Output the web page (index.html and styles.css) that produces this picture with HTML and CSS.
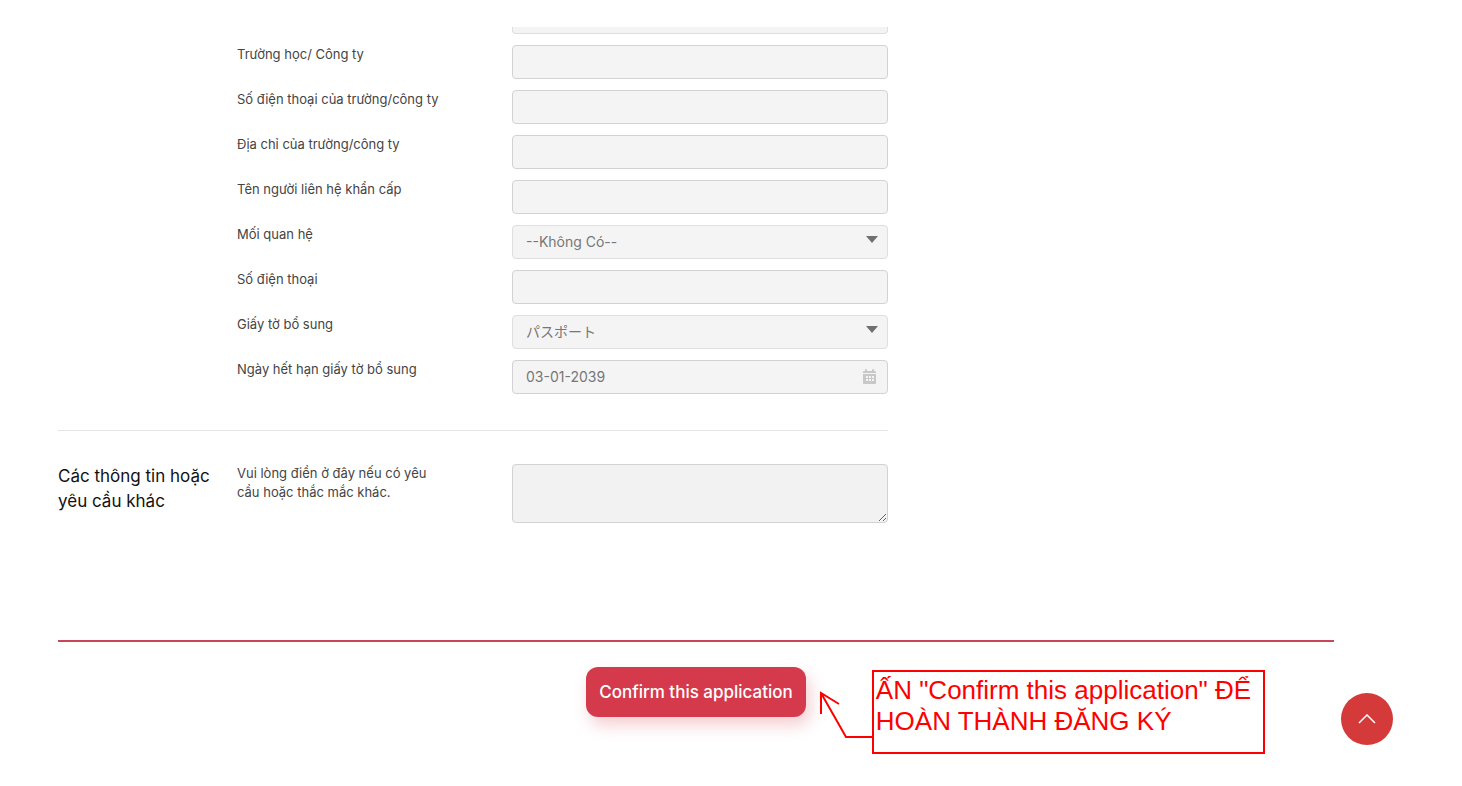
FILE: index.html
```html
<!DOCTYPE html>
<html lang="vi">
<head>
    <meta charset="UTF-8">
    <meta name="viewport" content="width=device-width, initial-scale=1.0">
    <title>Application</title>
    <link rel="stylesheet" href="styles.css">
</head>
<body>

<main class="page">
    <form>
        <section class="section">
            <div class="fields">
                <div class="row cut">
                    <input class="control" type="text" aria-label="Email" readonly>
                </div>
                <div class="row">
                    <label for="school">Trường học/ Công ty</label>
                    <input class="control" type="text" id="school" readonly>
                </div>
                <div class="row">
                    <label for="schoolPhone">Số điện thoại của trường/công ty</label>
                    <input class="control" type="text" id="schoolPhone" readonly>
                </div>
                <div class="row">
                    <label for="schoolAddress">Địa chỉ của trường/công ty</label>
                    <input class="control" type="text" id="schoolAddress" readonly>
                </div>
                <div class="row">
                    <label for="contactName">Tên người liên hệ khẩn cấp</label>
                    <input class="control" type="text" id="contactName" readonly>
                </div>
                <div class="row">
                    <label for="relation">Mối quan hệ</label>
                    <div class="control-wrap">
                        <select class="control select" id="relation">
                            <option>--Không Có--</option>
                        </select>
                        <span class="arrow"></span>
                    </div>
                </div>
                <div class="row">
                    <label for="phone">Số điện thoại</label>
                    <input class="control" type="text" id="phone" readonly>
                </div>
                <div class="row">
                    <label for="document">Giấy tờ bổ sung</label>
                    <div class="control-wrap">
                        <select class="control select" id="document">
                            <option>パスポート</option>
                        </select>
                        <span class="arrow"></span>
                    </div>
                </div>
                <div class="row">
                    <label for="expiry">Ngày hết hạn giấy tờ bổ sung</label>
                    <div class="control-wrap">
                        <input class="control" type="text" id="expiry" value="03-01-2039" readonly>
                        <svg class="calendar" viewBox="0 0 13 15" width="13" height="15">
                            <path d="M0 4V3q0-1 1-1h1V1q0-1 1-1t1 1v1h5V1q0-1 1-1t1 1v1h1q1 0 1 1v1z" fill="#c8c8c8"/>
                            <path d="M0 5h13v9q0 1-1 1H1q-1 0-1-1z" fill="#c8c8c8"/>
                            <path d="M3 7h2v2H3zM6 7h2v2H6zM9 7h2v2H9zM3 10h2v2H3zM6 10h2v2H6zM9 10h2v2H9z" fill="#f4f4f4"/>
                        </svg>
                    </div>
                </div>
            </div>
        </section>

        <section class="section other">
            <h2>Các thông tin hoặc yêu cầu khác</h2>
            <div class="fields">
                <div class="row">
                    <label for="other">Vui lòng điền ở đây nếu có yêu cầu hoặc thắc mắc khác.</label>
                    <textarea class="control textarea" id="other" readonly></textarea>
                </div>
            </div>
        </section>

        <div class="actions">
            <div class="confirm-wrap">
                <button type="submit" class="confirm">Confirm this application</button>
                <div class="note">
                    <svg class="pointer" viewBox="0 0 52 84" width="52" height="84">
                        <path d="M52 67H26L1 23M19 34L1 23V44" fill="none" stroke="#f00" stroke-width="2"/>
                    </svg>
                    <p>ẤN "Confirm this application" ĐỂ HOÀN THÀNH ĐĂNG KÝ</p>
                </div>
            </div>
        </div>
    </form>
</main>

<button type="button" class="to-top" aria-label="Top">
    <svg viewBox="0 0 18 10" width="18" height="10">
        <path d="M1 9l8-8 8 8" fill="none" stroke="#fff" stroke-width="1.5"/>
    </svg>
</button>

</body>
</html>
```
FILE: styles.css
```css
* {
    box-sizing: border-box;
}

body {
    margin: 0;
    min-height: 100vh;
    background: #fff;
    color: #444;
    font-family: Inter, "Noto Sans CJK JP", sans-serif;
    font-size: 13px;
}

.page {
    min-height: 100vh;
    padding: 27px 128px 32px 58px;
}

.section {
    display: flex;
    justify-content: flex-end;
    max-width: 830px;
}

.section h2 {
    flex: 1;
    margin: 0;
    color: #111;
    font-size: 17px;
    font-weight: 400;
    line-height: 25px;
}

.fields {
    display: flex;
    flex-direction: column;
    gap: 11px;
    width: 651px;
}

.row {
    display: flex;
    justify-content: space-between;
}

.row label {
    width: 200px;
    line-height: 19px;
    white-space: nowrap;
}

.control {
    width: 376px;
    height: 34px;
    padding: 0 13px 2px;
    border: 1px solid #d2d2d2;
    border-radius: 4px;
    background: #f4f4f4;
    color: #777;
    font-family: inherit;
    font-size: 14px;
    outline: none;
}

.cut {
    justify-content: flex-end;
}

/* only the bottom edge of the previous field is in view */
.cut .control {
    height: 7px;
    border-top: 0;
    border-color: #dedede;
    border-radius: 0 0 4px 4px;
}

.control-wrap {
    position: relative;
}

.select {
    display: block;
    appearance: none;
    border-color: #dfdfdf;
}

.arrow {
    position: absolute;
    top: 11px;
    right: 10px;
    border: 6px solid transparent;
    border-top: 7px solid #707070;
    border-bottom: 0;
    pointer-events: none;
}

.calendar {
    position: absolute;
    top: 9px;
    right: 12px;
}

.other {
    margin-top: 36px;
    padding-top: 33px;
    border-top: 1px solid #e6e6e6;
}

.other .row label {
    white-space: normal;
}

.textarea {
    height: 59px;
    background: #f2f2f2;
    resize: vertical;
}

.actions {
    display: flex;
    justify-content: center;
    margin-top: 117px;
    padding-top: 25px;
    border-top: 2px solid #c94558;
}

.confirm-wrap {
    position: relative;
}

.confirm {
    height: 50px;
    padding: 0 13px;
    border: 0;
    border-radius: 12px;
    background: #d43a4c;
    box-shadow: 4px 8px 16px rgba(212, 58, 76, 0.25);
    color: #fff;
    font-family: inherit;
    font-size: 17px;
    font-weight: 500;
    white-space: nowrap;
}

/* callout beside the button */
.note {
    position: absolute;
    top: 3px;
    left: 100%;
    display: flex;
    margin-left: 14px;
}

.note p {
    width: 393px;
    height: 84px;
    margin: 0;
    padding: 3px 2px;
    border: 2px solid #f00;
    color: #f00;
    font-family: "Liberation Sans", Arial, sans-serif;
    font-size: 26px;
    line-height: 31px;
}

.to-top {
    position: fixed;
    right: 69px;
    bottom: 41px;
    display: flex;
    align-items: center;
    justify-content: center;
    width: 52px;
    height: 52px;
    padding: 0;
    border: 0;
    border-radius: 50%;
    background: #d43a3a;
}
```
